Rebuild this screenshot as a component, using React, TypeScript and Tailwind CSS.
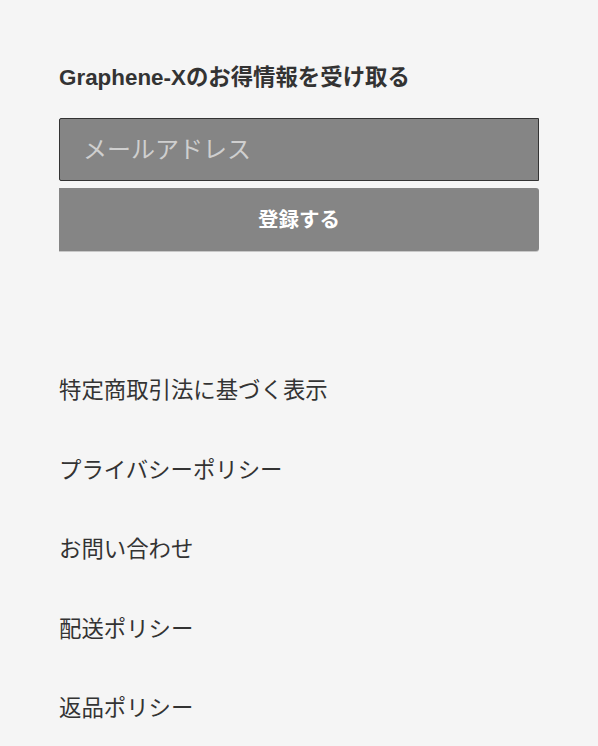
const links = [
  "特定商取引法に基づく表示",
  "プライバシーポリシー",
  "お問い合わせ",
  "配送ポリシー",
  "返品ポリシー",
];

export default function App() {
  return (
    <div
      className="min-h-[746px] bg-[#f5f5f5] px-[59px] pt-[62px] text-[#333]"
      style={{ fontFamily: '"Liberation Sans", "Noto Sans CJK JP", sans-serif' }}
    >
      <h2 className="text-[22.4px] font-bold leading-[32px]">Graphene-Xのお得情報を受け取る</h2>
      <form className="mt-[24px] w-[480px]">
        <input
          type="email"
          placeholder="メールアドレス"
          className="block h-[63px] w-full rounded-l-[2px] border border-[#333] bg-[#858585] px-[23px] pt-[1px] text-[24px] text-white outline-none placeholder:text-[#cfcfcf]"
        />
        <button
          type="button"
          className="mt-[7px] block h-[63px] w-full rounded-r-[3px] bg-[#858585] pt-[2px] text-[20.5px] font-bold text-white shadow-[0_1px_0_#c8c8c8]"
        >
          登録する
        </button>
      </form>
      <ul className="mt-[123px] space-y-[46.5px]">
        {links.map((l) => (
          <li key={l} className="text-[22.4px] leading-[33px]">
            {l}
          </li>
        ))}
      </ul>
    </div>
  );
}
